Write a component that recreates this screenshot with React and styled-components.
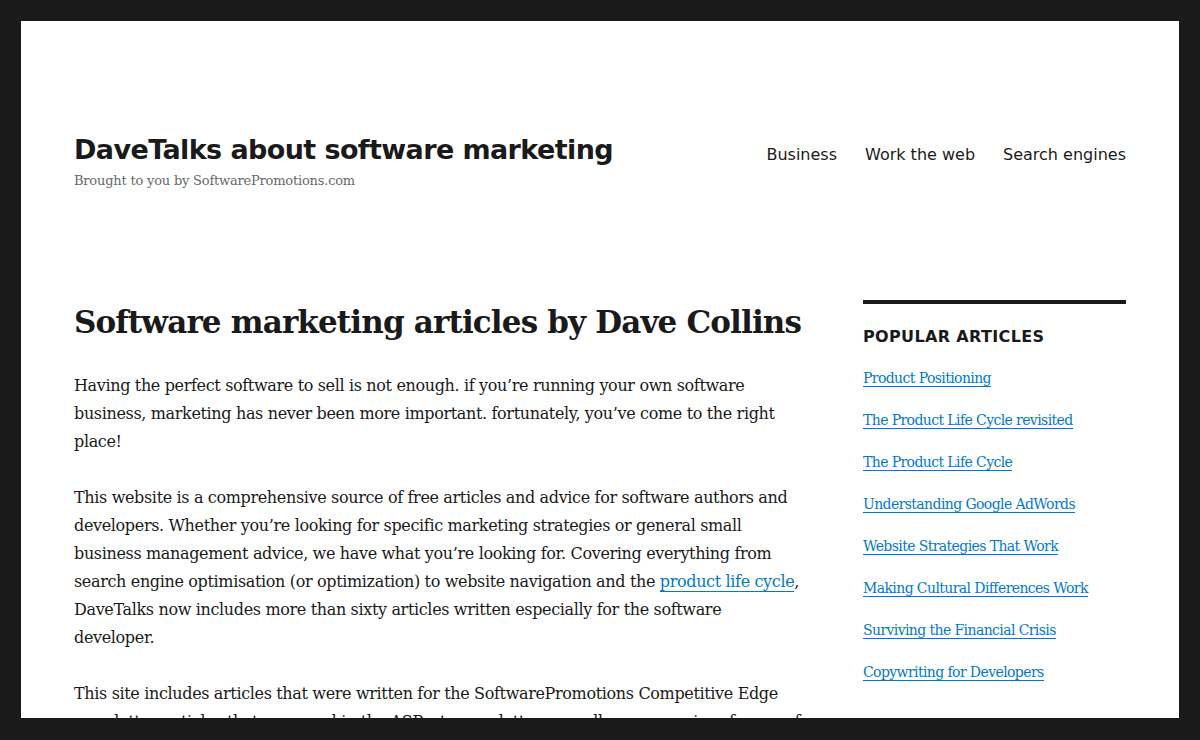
import styled, { createGlobalStyle } from 'styled-components'

const GlobalStyle = createGlobalStyle`
  html, body {
    margin: 0;
    padding: 0;
    background: #1a1a1a;
  }
  body {
    font-family: "DejaVu Serif", serif;
    color: #1a1a1a;
  }
  a {
    color: #007acc;
    text-decoration: none;
    box-shadow: 0 1px 0 0 currentColor;
  }
`

const Page = styled.div`
  background: #fff;
  margin: 21px 21px 0;
  min-height: 760px;
`

const Header = styled.header`
  display: flex;
  justify-content: space-between;
  align-items: flex-start;
  padding: 111px 53px 0;
  height: 168px;
`

const Branding = styled.div`
  display: flex;
  flex-direction: column;
  gap: 3px;
`

const SiteTitle = styled.h1`
  margin: 0;
  font-family: "DejaVu Sans", sans-serif;
  font-weight: 700;
  font-size: 27px;
  line-height: 35px;
  letter-spacing: -0.6px;
`

const Tagline = styled.p`
  margin: 0;
  font-size: 13px;
  line-height: 21px;
  letter-spacing: -0.2px;
  color: #686868;
`

const Nav = styled.nav`
  display: flex;
  gap: 28px;
  padding-top: 12px;
`

const NavLink = styled.span`
  font-family: "DejaVu Sans", sans-serif;
  font-size: 16px;
  line-height: 21px;
  color: #1a1a1a;
`

const Columns = styled.div`
  display: flex;
  justify-content: space-between;
  padding: 0 53px;
`

const Main = styled.main`
  width: 731px;
`

const Title = styled.h2`
  margin: 0 0 28px;
  font-size: 31px;
  line-height: 44px;
  font-weight: 700;
  letter-spacing: -0.85px;
`

const Para = styled.p`
  margin: 0 0 28px;
  font-size: 16px;
  line-height: 28px;
  letter-spacing: -0.35px;
`

const Sidebar = styled.aside`
  width: 263px;
  border-top: 4px solid #1a1a1a;
  padding-top: 22px;
`

const WidgetTitle = styled.h2`
  margin: 0 0 21px;
  font-family: "DejaVu Sans", sans-serif;
  font-weight: 700;
  font-size: 16px;
  line-height: 21px;
  letter-spacing: 0.35px;
  text-transform: uppercase;
`

const LinkList = styled.ul`
  list-style: none;
  margin: 0;
  padding: 0;
`

const LinkItem = styled.li`
  font-size: 14px;
  line-height: 21px;
  letter-spacing: -0.6px;
  margin-bottom: 21px;
`

const BottomEdge = styled.div`
  position: fixed;
  left: 0;
  right: 0;
  bottom: 0;
  height: 22px;
  background: #1a1a1a;
`

const articles = [
  'Product Positioning',
  'The Product Life Cycle revisited',
  'The Product Life Cycle',
  'Understanding Google AdWords',
  'Website Strategies That Work',
  'Making Cultural Differences Work',
  'Surviving the Financial Crisis',
  'Copywriting for Developers',
]

export default function App() {
  return (
    <>
      <GlobalStyle />
      <Page>
        <Header>
          <Branding>
            <SiteTitle>DaveTalks about software marketing</SiteTitle>
            <Tagline>Brought to you by SoftwarePromotions.com</Tagline>
          </Branding>
          <Nav>
            <NavLink>Business</NavLink>
            <NavLink>Work the web</NavLink>
            <NavLink>Search engines</NavLink>
          </Nav>
        </Header>
        <Columns>
          <Main>
            <Title>Software marketing articles by Dave Collins</Title>
            <Para>
              Having the perfect software to sell is not enough. if you’re running your own
              software business, marketing has never been more important. fortunately, you’ve
              come to the right place!
            </Para>
            <Para>
              This website is a comprehensive source of free articles and advice for software
              authors and developers. Whether you’re looking for specific marketing strategies or
              general small business management advice, we have what you’re looking for.
              Covering everything from search engine optimisation (or optimization) to website
              navigation and the <a href="#">product life cycle</a>, DaveTalks now includes more
              than sixty articles written especially for the software developer.
            </Para>
            <Para>
              This site includes articles that were written for the SoftwarePromotions
              Competitive Edge newsletter, articles that appeared in the ASPects newsletter, as
              well as summaries of some of the talks I have given at conferences.
            </Para>
          </Main>
          <Sidebar>
            <WidgetTitle>Popular articles</WidgetTitle>
            <LinkList>
              {articles.map((a) => (
                <LinkItem key={a}>
                  <a href="#">{a}</a>
                </LinkItem>
              ))}
            </LinkList>
          </Sidebar>
        </Columns>
      </Page>
      <BottomEdge />
    </>
  )
}
